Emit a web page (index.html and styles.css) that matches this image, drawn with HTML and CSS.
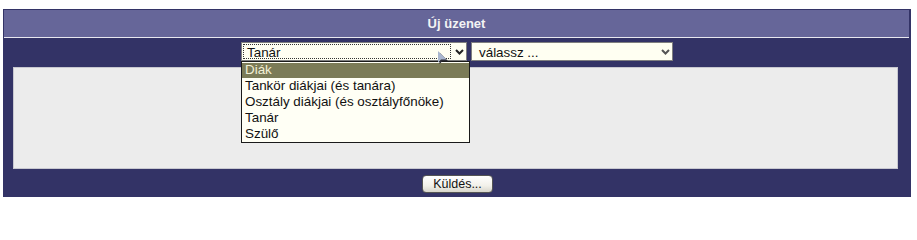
FILE: index.html
```html
<!DOCTYPE html>
<html>
<head>
<meta charset="utf-8">
<link rel="stylesheet" href="styles.css">
</head>
<body>
<div class="panel">
  <div class="header">Új üzenet</div>
  <div class="rule"></div>
  <div class="selects">
    <div class="combo combo-a">
      <div class="combo-field focused">Tanár</div>
      <div class="combo-btn"><svg width="9" height="6" viewBox="0 0 9 6"><path d="M1 1 L4.5 4.5 L8 1" fill="none" stroke="#222" stroke-width="2"/></svg></div>
      <ul class="dropdown">
        <li class="sel">Diák</li>
        <li>Tankör diákjai (és tanára)</li>
        <li>Osztály diákjai (és osztályfőnöke)</li>
        <li>Tanár</li>
        <li>Szülő</li>
      </ul>
      <svg class="cursor" width="12" height="16" viewBox="0 0 12 16"><path d="M1.5 1.5 L1.5 13 L4.5 10 L10 10 Z" fill="#2a2a33" transform="translate(1,1)"/><path d="M1 1 L1 12.5 L4 9.5 L9.5 9.5 Z" fill="#a9b6cf"/></svg>
    </div>
    <div class="combo combo-b">
      <div class="combo-field">válassz ...</div>
      <div class="combo-btn"><svg width="9" height="6" viewBox="0 0 9 6"><path d="M1 1 L4.5 4.5 L8 1" fill="none" stroke="#555" stroke-width="2"/></svg></div>
    </div>
  </div>
  <div class="textarea"></div>
  <div class="actions">
    <button class="btn">Küldés...</button>
  </div>
</div>
</body>
</html>
```
FILE: styles.css
```css
html, body {
  margin: 0;
  padding: 0;
  background: #ffffff;
  font-family: "Liberation Sans", Arial, sans-serif;
}
.panel {
  margin: 9px 0 0 3px;
  width: 908px;
  height: 188px;
  background: #333366;
  box-sizing: border-box;
  padding: 1px 2px 0 1px;
  display: flex;
  flex-direction: column;
}
.header {
  height: 27px;
  background: #666699;
  color: #f4f4f4;
  font-weight: bold;
  font-size: 13px;
  line-height: 27px;
  text-align: center;
}
.rule {
  height: 1px;
  background: #e8e8f0;
}
.selects {
  margin-top: 4px;
  display: flex;
  justify-content: center;
  gap: 4px;
  padding-left: 1px;
  height: 19px;
  position: relative;
  z-index: 2;
}
.combo {
  position: relative;
  display: flex;
  height: 19px;
  box-sizing: border-box;
  border: 1px solid #7f7f7f;
  background: #fffff2;
}
.combo-a { width: 226px; }
.combo-b { width: 202px; }
.combo-field {
  flex: 1;
  font-size: 13.4px;
  line-height: 15px;
  padding: 0 3px;
  margin: 1px;
  color: #111;
  border: 1px solid transparent;
}
.combo-field.focused {
  border: 1px dotted #333;
}
.combo-b .combo-field {
  padding-left: 5px;
}
.combo-btn {
  width: 14px;
  display: flex;
  align-items: center;
  justify-content: center;
  background: #fffff2;
}
.dropdown {
  position: absolute;
  left: -1px;
  top: 18px;
  width: 229px;
  margin: 0;
  padding: 1px 0 0 0;
  list-style: none;
  background: #fffff5;
  border: 1px solid #1a1a1a;
  box-sizing: border-box;
  height: 82px;
}
.dropdown li {
  font-size: 13.4px;
  line-height: 16px;
  padding-left: 3px;
  color: #111;
  white-space: nowrap;
}
.dropdown li.sel {
  background: #7b7b57;
  color: #f2f0d6;
  line-height: 14px;
  padding-bottom: 1px;
}
.cursor {
  position: absolute;
  left: 195px;
  top: 7px;
}
.textarea {
  margin: 6px 11px 0 9px;
  height: 102px;
  background: #ececec;
  border: 1px solid #c8c8d0;
  box-sizing: border-box;
}
.actions {
  display: flex;
  justify-content: center;
  padding-top: 6px;
  padding-left: 2px;
}
.btn {
  width: 71px;
  height: 18px;
  padding: 0;
  font-family: "Liberation Sans", Arial, sans-serif;
  font-size: 12.5px;
  color: #111;
  border: 1px solid #555;
  border-radius: 4px;
  background: linear-gradient(#ffffff, #f2f1ea 60%, #d8d6cc);
}
```
